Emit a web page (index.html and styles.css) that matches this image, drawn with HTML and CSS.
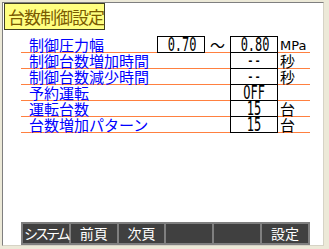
FILE: index.html
```html
<!DOCTYPE html>
<html lang="ja">
<head>
  <meta charset="UTF-8">
  <title>台数制御設定</title>
  <link rel="stylesheet" href="styles.css">
</head>
<body>

  <div class="panel">
    <div class="title">台数制御設定</div>

    <div class="rows">
      <div class="row">
        <span class="label">制御圧力幅</span>
        <span class="cell"><span class="num">0.70</span></span>
        <span class="tilde">～</span>
        <span class="cell"><span class="num">0.80</span></span>
        <span class="unit mpa">MPa</span>
      </div>
      <div class="row">
        <span class="label">制御台数増加時間</span>
        <span class="blank"></span>
        <span class="tilde"></span>
        <span class="cell"><span class="num">--</span></span>
        <span class="unit">秒</span>
      </div>
      <div class="row">
        <span class="label">制御台数減少時間</span>
        <span class="blank"></span>
        <span class="tilde"></span>
        <span class="cell"><span class="num">--</span></span>
        <span class="unit">秒</span>
      </div>
      <div class="row">
        <span class="label">予約運転</span>
        <span class="blank"></span>
        <span class="tilde"></span>
        <span class="cell"><span class="num">OFF</span></span>
        <span class="unit"></span>
      </div>
      <div class="row">
        <span class="label">運転台数</span>
        <span class="blank"></span>
        <span class="tilde"></span>
        <span class="cell"><span class="num">15</span></span>
        <span class="unit">台</span>
      </div>
      <div class="row">
        <span class="label">台数増加パターン</span>
        <span class="blank"></span>
        <span class="tilde"></span>
        <span class="cell"><span class="num">15</span></span>
        <span class="unit">台</span>
      </div>
    </div>

    <div class="bar">
      <div class="btn narrow">システム</div>
      <div class="btn">前頁</div>
      <div class="btn">次頁</div>
      <div class="btn"></div>
      <div class="btn"></div>
      <div class="btn">設定</div>
    </div>
  </div>

</body>
</html>
```

FILE: styles.css
```css
body {
  margin: 0;
  background: #ece9d8;
  font-family: "Noto Sans CJK JP", "DejaVu Sans", sans-serif;
}

.panel {
  margin: 2px 0 0 2px;
  width: 320px;
  height: 242px;
  background: #fff;
  border-top: 1px solid #7f7f7f;
  border-left: 1px solid #7f7f7f;
  border-right: 1px solid #d6d3c6;
  border-bottom: 1px solid #d6d3c6;
  display: flex;
  flex-direction: column;
}

/* 見出し */
.title {
  align-self: flex-start;
  box-sizing: border-box;
  margin-left: 1px;
  width: 101px;
  height: 27px;
  background: #ffff80;
  border: 1px solid #404020;
  color: #7a5a00;
  font-size: 17px;
  line-height: 26px;
  padding-left: 3px;
  letter-spacing: -1px;
  white-space: nowrap;
}

.rows {
  margin: 7px 0 0 18px;
  width: 289px;
}

.row {
  display: flex;
  height: 15px;
  border-bottom: 1px solid #ff8040;
}

.label {
  width: 136px;
  padding-left: 8px;
  box-sizing: border-box;
  color: #0000ff;
  font-size: 15px;
  line-height: 15px;
  white-space: nowrap;
}

.cell,
.blank {
  width: 48px;
  flex-shrink: 0;
}

.cell {
  box-sizing: border-box;
  height: 17px;
  margin-top: -1px;
  border: 1px solid #000;
  text-align: center;
  line-height: 15px;
}

.num {
  display: inline-block;
  vertical-align: top;
  font-family: "DejaVu Sans Mono", monospace;
  font-size: 20px;
  line-height: 15px;
  transform: scaleX(0.6);
  color: #000;
}

.tilde {
  width: 25px;
  flex-shrink: 0;
  text-align: center;
  font-size: 15px;
  line-height: 15px;
  color: #000;
}

.unit {
  padding-left: 2px;
  font-size: 15px;
  line-height: 15px;
  color: #000;
}

.unit.mpa {
  font-family: "DejaVu Sans", sans-serif;
  font-size: 13px;
  line-height: 17px;
}

/* 下部ボタン */
.bar {
  margin: auto 0 0 18px;
  width: 289px;
  box-sizing: border-box;
  height: 23px;
  padding: 2px;
  background: #7f7f7f;
  display: flex;
  gap: 2px;
}

.btn {
  flex: 1;
  background: #404040;
  color: #fff;
  font-size: 14px;
  line-height: 19px;
  text-align: center;
}

.btn.narrow {
  letter-spacing: -3px;
}
```
